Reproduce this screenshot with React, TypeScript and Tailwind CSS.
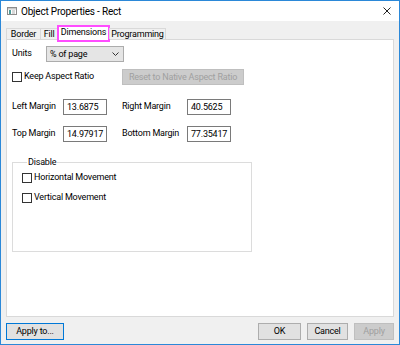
const font = "font-['Roboto','Noto_Sans',sans-serif] tracking-[-0.2px]";

function Checkbox({ label }: { label: string }) {
  return (
    <label className="flex items-center gap-[2px] h-[12px] whitespace-nowrap">
      <span className="w-[10px] h-[10px] border border-[#333333] bg-white shrink-0" />
      <span>{label}</span>
    </label>
  );
}

function Field({ label, value, labelW }: { label: string; value: string; labelW: string }) {
  return (
    <div className="flex items-center">
      <span className={`${labelW} whitespace-nowrap`}>{label}</span>
      <div className="w-[44px] h-[16px] border border-[#7a7a7a] bg-white flex items-center pl-[3px] leading-none">
        {value}
      </div>
    </div>
  );
}

function Btn({ children, w, focus, disabled }: { children: string; w: string; focus?: boolean; disabled?: boolean }) {
  return (
    <button
      className={`${w} h-[17px] flex items-center justify-center leading-none border whitespace-nowrap ${
        disabled
          ? "bg-[#cccccc] border-[#bfbfbf] text-[#a0a0a0]"
          : focus
          ? "bg-[#e1e1e1] border-[#0078d7]"
          : "bg-[#e1e1e1] border-[#adadad]"
      }`}
    >
      {children}
    </button>
  );
}

const tabs = [
  { t: "Border", w: "w-[35px]" },
  { t: "Fill", w: "w-[18px]" },
  { t: "Dimensions", w: "w-[53px]" },
  { t: "Programming", w: "w-[57px]" },
];

export default function App() {
  return (
    <div className={`w-[400px] h-[345px] border border-[#2b88d8] bg-[#f0f0f0] flex flex-col text-[9px] text-black ${font}`}>
      {/* title bar */}
      <div className="h-[20px] bg-white flex items-center pl-[6px] pr-[6px] shrink-0">
        <svg width="10" height="8" viewBox="0 0 10 8" className="mr-[4px]">
          <rect x="0.5" y="0.5" width="9" height="7" fill="#ffffff" stroke="#8c8c8c" />
          <rect x="1" y="1" width="8" height="1.5" fill="#c8c8c8" />
          <rect x="2" y="3" width="2" height="4" fill="#4a9a9a" />
          <rect x="5" y="3" width="3" height="4" fill="#d8d8d8" />
        </svg>
        <span className="text-[10px]">Object Properties - Rect</span>
        <svg width="8" height="8" viewBox="0 0 8 8" className="ml-auto mr-[2px]">
          <path d="M0.5 0.5 L7.5 7.5 M7.5 0.5 L0.5 7.5" stroke="#222" strokeWidth="1" />
        </svg>
      </div>

      <div className="flex-1 flex flex-col px-[5px]">
        {/* tabs */}
        <div className="h-[18px] flex items-end shrink-0 relative z-10">
          {tabs.map(({ t, w }) =>
            t === "Dimensions" ? (
              <div
                key={t}
                className={`${w} h-[17px] -mb-[3px] -mr-px bg-white border-2 border-[#ff4dff] flex items-center justify-center pb-[2px] leading-none`}
              >
                {t}
              </div>
            ) : (
              <div
                key={t}
                className={`${w} h-[11px] border border-b-0 border-[#d9d9d9] bg-[#f0f0f0] flex items-center justify-center leading-none -mr-px`}
              >
                {t}
              </div>
            )
          )}
        </div>

        {/* panel */}
        <div className="h-[278px] bg-white border border-[#d9d9d9] pl-[5px] pt-[6px] flex flex-col">
          <div className="flex items-center">
            <span className="w-[34px]">Units</span>
            <div className="w-[78px] h-[16px] bg-[#e5e5e5] border border-[#acacac] flex items-center pl-[3px] pr-[4px] leading-none">
              <span>% of page</span>
              <svg width="7" height="4" viewBox="0 0 7 4" className="ml-auto">
                <path d="M0.5 0.5 L3.5 3.5 L6.5 0.5" stroke="#333" fill="none" />
              </svg>
            </div>
          </div>

          <div className="flex items-center mt-[7px]">
            <div className="w-[110px]">
              <Checkbox label="Keep Aspect Ratio" />
            </div>
            <div className="w-[122px] h-[16px] bg-[#cccccc] border border-[#bfbfbf] text-[#a0a0a0] flex items-center justify-center leading-none whitespace-nowrap">
              Reset to Native Aspect Ratio
            </div>
          </div>

          <div className="flex items-center mt-[14px]">
            <Field label="Left Margin" value="13.6875" labelW="w-[51px]" />
            <div className="w-[15px]" />
            <Field label="Right Margin" value="40.5625" labelW="w-[65px]" />
          </div>
          <div className="flex items-center mt-[11px]">
            <Field label="Top Margin" value="14.97917" labelW="w-[51px]" />
            <div className="w-[15px]" />
            <Field label="Bottom Margin" value="77.35417" labelW="w-[65px]" />
          </div>

          <fieldset className="w-[240px] h-[96px] border border-[#dcdcdc] mt-[14px] pl-[9px] flex flex-col gap-[8px]">
            <legend className="ml-[5px] px-[1px] leading-[12px]">Disable</legend>
            <div className="mt-[4px]">
              <Checkbox label="Horizontal Movement" />
            </div>
            <Checkbox label="Vertical Movement" />
          </fieldset>
        </div>

        {/* buttons */}
        <div className="flex items-center mt-[6px] gap-[6px]">
          <Btn w="w-[58px]" focus>
            Apply to...
          </Btn>
          <div className="flex-1" />
          <Btn w="w-[43px]">OK</Btn>
          <Btn w="w-[41px]">Cancel</Btn>
          <Btn w="w-[40px]" disabled>
            Apply
          </Btn>
        </div>
      </div>
    </div>
  );
}
